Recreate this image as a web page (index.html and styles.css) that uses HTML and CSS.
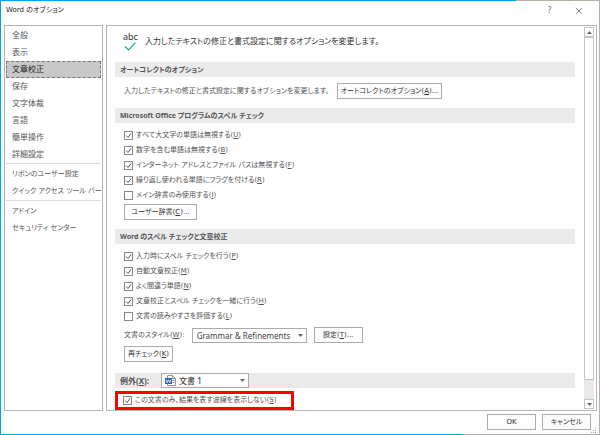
FILE: index.html
```html
<!DOCTYPE html>
<html lang="ja">
<head>
    <meta charset="UTF-8">
    <meta name="viewport" content="width=device-width, initial-scale=1.0">
    <title>Word のオプション</title>
    <link rel="stylesheet" href="styles.css">
</head>
<body>
<div class="dialog">
    <header class="titlebar">
        <h1>Word のオプション</h1>
        <button type="button" class="title-button">?</button>
        <button type="button" class="title-button" aria-label="閉じる">
            <svg width="8" height="8" viewBox="0 0 8 8"><path d="M.8.8l6.4 6.4M7.2.8L.8 7.2" stroke="#888" fill="none"/></svg>
        </button>
    </header>

    <div class="main">
        <nav class="sidebar">
            <a href="#">全般</a>
            <a href="#">表示</a>
            <a href="#" class="selected">文章校正</a>
            <a href="#">保存</a>
            <a href="#">文字体裁</a>
            <a href="#">言語</a>
            <a href="#">簡単操作</a>
            <a href="#">詳細設定</a>
            <hr>
            <a href="#" class="kana">リボンのユーザー設定</a>
            <a href="#" class="kana">クイック アクセス ツール バー</a>
            <hr>
            <a href="#" class="kana">アドイン</a>
            <a href="#" class="kana">セキュリティ センター</a>
        </nav>

        <div class="panel">
            <form class="content">
                <div class="intro">
                    <div class="proof-icon">
                        <span>abc</span>
                        <svg width="12" height="9" viewBox="0 0 12 9"><path d="M1 4.5l3.6 3.4L11.4.8" stroke="#21b085" stroke-width="1.3" fill="none"/></svg>
                    </div>
                    <p>入力したテキストの修正と書式設定に関するオプションを変更します。</p>
                </div>

                <h2 class="bar">オートコレクトのオプション</h2>
                <div class="row autocorrect">
                    <span>入力したテキストの修正と書式設定に関するオプションを変更します。</span>
                    <button type="button" class="btn wide">オートコレクトのオプション(<u>A</u>)...</button>
                </div>

                <h2 class="bar">Microsoft Office プログラムのスペル チェック</h2>
                <div class="checks">
                    <label><input type="checkbox" checked>すべて大文字の単語は無視する(<u>U</u>)</label>
                    <label><input type="checkbox" checked>数字を含む単語は無視する(<u>B</u>)</label>
                    <label><input type="checkbox" checked>インターネット アドレスとファイル パスは無視する(<u>F</u>)</label>
                    <label><input type="checkbox" checked>繰り返し使われる単語にフラグを付ける(<u>R</u>)</label>
                    <label><input type="checkbox">メイン辞書のみ使用する(<u>I</u>)</label>
                </div>
                <div class="row dictionary">
                    <button type="button" class="btn medium">ユーザー辞書(<u>C</u>)...</button>
                </div>

                <h2 class="bar">Word のスペル チェックと文章校正</h2>
                <div class="checks">
                    <label><input type="checkbox" checked>入力時にスペル チェックを行う(<u>P</u>)</label>
                    <label><input type="checkbox" checked>自動文章校正(<u>M</u>)</label>
                    <label><input type="checkbox" checked>よく間違う単語(<u>N</u>)</label>
                    <label><input type="checkbox" checked>文章校正とスペル チェックを一緒に行う(<u>H</u>)</label>
                    <label><input type="checkbox">文書の読みやすさを評価する(<u>L</u>)</label>
                </div>
                <div class="row style-row">
                    <label for="style">文書のスタイル(<u>W</u>):</label>
                    <select id="style" class="select">
                        <option>Grammar &amp; Refinements</option>
                    </select>
                    <button type="button" class="btn small">設定(<u>T</u>)...</button>
                </div>
                <div class="row recheck">
                    <button type="button" class="btn small">再チェック(<u>K</u>)</button>
                </div>

                <div class="bar exceptions">
                    <label for="doc">例外(<u>X</u>):</label>
                    <div class="doc-select">
                        <svg width="11" height="11" viewBox="0 0 11 11">
                            <path d="M2.5.5h5l3 3v7h-8z" fill="#fff" stroke="#8a98ab"/>
                            <path d="M7.5.5v3h3M7.5 5.5h2M7.5 7.5h2" fill="none" stroke="#8a98ab"/>
                            <path d="M0 3h7v6H0z" fill="#2b62a8"/>
                            <path d="M1 4.4l1.1 3.3L3.5 4.9l1.3 2.8L6 4.4" fill="none" stroke="#fff" stroke-width=".8"/>
                        </svg>
                        <select id="doc" class="select">
                            <option>文書 1</option>
                        </select>
                    </div>
                </div>
                <div class="highlight">
                    <label><input type="checkbox" checked>この文書のみ、結果を表す波線を表示しない(<u>S</u>)</label>
                </div>
            </form>

            <div class="scrollbar">
                <button type="button" aria-label="上へ"><svg width="5" height="3" viewBox="0 0 5 3"><path d="M0 3L2.5 0 5 3z" fill="#666"/></svg></button>
                <div class="thumb"></div>
                <div class="track"></div>
                <button type="button" aria-label="下へ"><svg width="5" height="3" viewBox="0 0 5 3"><path d="M0 0l2.5 3L5 0z" fill="#666"/></svg></button>
            </div>
        </div>
    </div>

    <footer class="footer">
        <button type="button" class="btn">OK</button>
        <button type="button" class="btn">キャンセル</button>
        <svg class="grip" width="6" height="6" viewBox="0 0 6 6"><path d="M4 0h1v1H4zM2 2h1v1H2zM4 2h1v1H4zM0 4h1v1H0zM2 4h1v1H2zM4 4h1v1H4z" fill="#aaa"/></svg>
    </footer>
</div>
</body>
</html>
```

FILE: styles.css
```css
* {
    box-sizing: border-box;
}
body {
    margin: 0;
    font-family: "DejaVu Sans", "Noto Sans CJK JP", sans-serif;
    font-size: 7px;
    line-height: 15px;
    font-feature-settings: "palt", "kern";
    color: #555;
    background: #fff;
}
h1, h2, p {
    margin: 0;
}
button, select, input {
    font: inherit;
    font-feature-settings: inherit;
    color: inherit;
    margin: 0;
}
.dialog {
    display: flex;
    flex-direction: column;
    min-height: 100vh;
    padding: 0 2px 0 3px;
    border: 1px solid;
    border-image: linear-gradient(97deg, #00a2e8 79%, #b5b0a2 79%) 1;
}

/* Title bar */
.titlebar {
    display: flex;
    align-items: center;
    height: 24px;
    padding: 0 4px 5px 2px;
}
.titlebar h1 {
    flex: 1;
    font-size: 7px;
    font-weight: normal;
    color: #222;
}
.title-button {
    display: flex;
    align-items: center;
    justify-content: center;
    width: 29px;
    height: 16px;
    padding: 0;
    border: none;
    background: none;
    font-size: 8px;
    color: #777;
}

/* Columns */
.main {
    display: flex;
    flex: 1;
    gap: 3px;
}
.sidebar {
    width: 99px;
    padding: 1px;
    border: 1px solid #b4b4b4;
}
.sidebar a {
    display: block;
    height: 17px;
    padding-left: 6px;
    font-size: 8px;
    line-height: 17px;
    color: #555;
    text-decoration: none;
    white-space: nowrap;
}
.sidebar .kana {
    font-size: 7px;
}
.sidebar .selected {
    border: 1px dashed #777;
    background: #c8c8c8;
    padding-left: 5px;
    line-height: 15px;
    color: #222;
}
.sidebar hr {
    height: 1px;
    margin: 0 0 2px;
    border: none;
    background: #ddd;
}
.panel {
    display: flex;
    flex: 1;
    gap: 9px;
    padding: 1px 2px 0 8px;
    border: 1px solid #b4b4b4;
}
.content {
    flex: 1;
}

/* Sections */
.intro {
    display: flex;
    align-items: center;
    gap: 7px;
    height: 28px;
    margin-bottom: 7px;
    padding-left: 8px;
    color: #333;
}
.intro p {
    font-size: 8px;
}
.proof-icon {
    display: flex;
    flex-direction: column;
    align-items: center;
    font-family: "Noto Sans", sans-serif;
    font-size: 9px;
    line-height: 10px;
}
.bar {
    height: 15px;
    padding-left: 5px;
    background: #ebebeb;
    font-family: "Noto Sans", "Noto Sans CJK JP", sans-serif;
    font-size: 7px;
    font-weight: bold;
    line-height: 15px;
    color: #555;
}
.row {
    display: flex;
    align-items: center;
    padding-left: 9px;
}
.autocorrect {
    gap: 8px;
    padding: 6px 0 9px 9px;
}
.checks {
    padding: 5px 0 1px 9px;
}
label {
    display: flex;
    align-items: center;
    white-space: nowrap;
}
.checks label {
    height: 15px;
}
.dictionary {
    padding-bottom: 9px;
}
.style-row {
    gap: 7px;
    padding-top: 2px;
}
.recheck {
    padding: 3px 0 11px 9px;
}
.exceptions {
    display: flex;
    gap: 12px;
    font-size: 8px;
}
.highlight {
    width: 179px;
    height: 19px;
    margin-top: 3px;
    padding-left: 5px;
    border: 3px solid #f00;
}
.highlight label {
    height: 13px;
}

/* Controls */
.btn {
    height: 16px;
    padding: 0;
    border: 1px solid #ababab;
    background: #fdfdfd;
    line-height: 14px;
    color: #333;
    white-space: nowrap;
}
.btn.small {
    width: 49px;
}
.btn.medium {
    width: 73px;
}
.btn.wide {
    width: 105px;
}
input[type="checkbox"] {
    appearance: none;
    width: 9px;
    height: 9px;
    margin-right: 3px;
    border: 1px solid #888;
    background: #fff;
}
input[type="checkbox"]:checked {
    background: url("data:image/svg+xml,%3Csvg xmlns='http://www.w3.org/2000/svg' viewBox='0 0 7 7'%3E%3Cpath d='M1 3.5l2 2L6.2 1.3' fill='none' stroke='%23555'/%3E%3C/svg%3E") center / 7px 7px no-repeat;
}
.select {
    appearance: none;
    width: 115px;
    height: 15px;
    padding: 0 12px 0 4px;
    border: 1px solid #ababab;
    border-radius: 0;
    background: #fff url("data:image/svg+xml,%3Csvg xmlns='http://www.w3.org/2000/svg' viewBox='0 0 5 3'%3E%3Cpath d='M0 0l2.5 3L5 0z' fill='%23666'/%3E%3C/svg%3E") right 3px center / 5px 3px no-repeat;
    font-family: "Noto Sans", "Noto Sans CJK JP", sans-serif;
    font-size: 8px;
    line-height: 13px;
    color: #444;
}
.doc-select {
    display: grid;
    align-items: center;
}
.doc-select > * {
    grid-area: 1 / 1;
}
.doc-select svg {
    z-index: 1;
    margin-left: 4px;
}
.doc-select .select {
    width: 88px;
    padding-left: 17px;
    font-weight: 500;
}

/* Scroll bar */
.scrollbar {
    display: flex;
    flex-direction: column;
    width: 10px;
    padding-bottom: 1px;
}
.scrollbar button {
    display: flex;
    align-items: center;
    justify-content: center;
    height: 10px;
    padding: 0;
    border: 1px solid #c4c4c4;
    background: #fff;
}
.scrollbar .thumb {
    flex: 18;
    border: 1px solid #c4c4c4;
    background: #fff;
}
.scrollbar .track {
    flex: 1;
    background: #e9e9e9;
}

/* Footer */
.footer {
    display: flex;
    justify-content: flex-end;
    align-items: flex-start;
    gap: 6px;
    height: 23px;
    padding-top: 3px;
}
.footer .btn {
    width: 49px;
}
.grip {
    align-self: flex-end;
    margin-left: -6px;
}
```
